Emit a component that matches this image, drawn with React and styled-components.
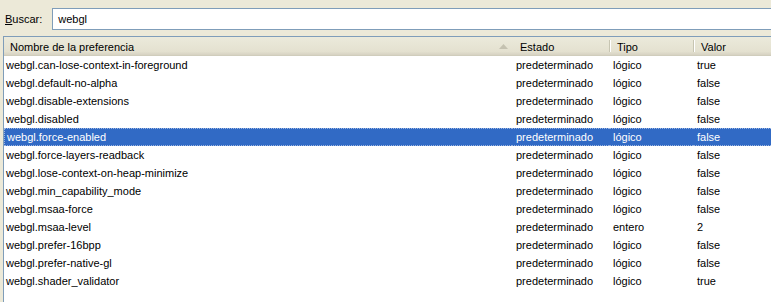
import React from "react"
import styled, { createGlobalStyle } from "styled-components"

const GlobalStyle = createGlobalStyle`
  html, body {
    margin: 0;
    padding: 0;
    background: #ece9d8;
    font-family: Tahoma, "Liberation Sans", Arial, sans-serif;
    font-size: 11px;
    color: #000;
    overflow: hidden;
  }
`

const Window = styled.div`
  width: 771px;
  height: 302px;
  background: #ece9d8;
  display: flex;
  flex-direction: column;
  overflow: hidden;
`

const SearchBar = styled.div`
  display: flex;
  align-items: center;
  gap: 10px;
  padding: 7px 0 0 5px;
  height: 23px;
`

const Label = styled.label`
  u {
    text-decoration: underline;
  }
`

const SearchInput = styled.div`
  flex: 1;
  height: 22px;
  box-sizing: border-box;
  background: #fff;
  border: 1px solid #7f9db9;
  border-right: none;
  padding: 4px 0 0 5px;
  margin-right: -2px;
`

const Tree = styled.div`
  margin: 6px 0 0 3px;
  flex: 1;
  background: #fff;
  border-left: 1px solid #7f9db9;
  border-top: 1px solid #7f9db9;
`

const Grid = styled.div`
  display: grid;
  grid-template-columns: 508px 97px 84px 1fr;
`

const HeaderCell = styled.div`
  height: 19px;
  box-sizing: border-box;
  background: linear-gradient(#ebeadb, #e4e1d0 80%, #d6d2c2);
  border-bottom: 1px solid #d0cdbc;
  padding: 4px 0 0 ${(p) => p.$pad || 8}px;
  position: relative;
  white-space: nowrap;

  & + &::before {
    content: "";
    position: absolute;
    left: 0;
    top: 3px;
    bottom: 3px;
    width: 1px;
    background: #c7c5b2;
    box-shadow: 1px 0 0 #fff;
  }
`

const SortArrow = styled.svg`
  position: absolute;
  right: 4px;
  top: 7px;
`

const Row = styled.div`
  display: contents;
`

const Cell = styled.div`
  height: 18px;
  box-sizing: border-box;
  padding: 2px 0 0 ${(p) => p.$pad}px;
  white-space: nowrap;
  overflow: hidden;
  background: ${(p) => (p.$selected ? "#316ac5" : "transparent")};
  color: ${(p) => (p.$selected ? "#fff" : "#000")};
  border-top: 1px dotted ${(p) => (p.$selected ? "#9bb4e0" : "transparent")};
  border-bottom: 1px dotted ${(p) => (p.$selected ? "#9bb4e0" : "transparent")};
  ${(p) => p.$first && p.$selected && "border-left: 1px dotted #9bb4e0;"}
`

const prefs = [
  ["webgl.can-lose-context-in-foreground", "lógico", "true"],
  ["webgl.default-no-alpha", "lógico", "false"],
  ["webgl.disable-extensions", "lógico", "false"],
  ["webgl.disabled", "lógico", "false"],
  ["webgl.force-enabled", "lógico", "false"],
  ["webgl.force-layers-readback", "lógico", "false"],
  ["webgl.lose-context-on-heap-minimize", "lógico", "false"],
  ["webgl.min_capability_mode", "lógico", "false"],
  ["webgl.msaa-force", "lógico", "false"],
  ["webgl.msaa-level", "entero", "2"],
  ["webgl.prefer-16bpp", "lógico", "false"],
  ["webgl.prefer-native-gl", "lógico", "false"],
  ["webgl.shader_validator", "lógico", "true"],
]

const App = () => {
  return (
    <Window>
      <GlobalStyle />
      <SearchBar>
        <Label>
          <u>B</u>uscar:
        </Label>
        <SearchInput>webgl</SearchInput>
      </SearchBar>
      <Tree>
        <Grid>
          <HeaderCell $pad={6}>
            Nombre de la preferencia
            <SortArrow width="9" height="5" viewBox="0 0 9 5">
              <path d="M0 5 L4.5 0 L9 5 Z" fill="#c4c1b0" />
            </SortArrow>
          </HeaderCell>
          <HeaderCell $pad={8}>Estado</HeaderCell>
          <HeaderCell $pad={8}>Tipo</HeaderCell>
          <HeaderCell $pad={8}>Valor</HeaderCell>
          {prefs.map(([name, type, value]) => {
            const sel = name === "webgl.force-enabled"
            return (
              <Row key={name}>
                <Cell $pad={2} $selected={sel} $first>
                  {name}
                </Cell>
                <Cell $pad={4} $selected={sel}>
                  predeterminado
                </Cell>
                <Cell $pad={4} $selected={sel}>
                  {type}
                </Cell>
                <Cell $pad={4} $selected={sel}>
                  {value}
                </Cell>
              </Row>
            )
          })}
        </Grid>
      </Tree>
    </Window>
  )
}

export default App
